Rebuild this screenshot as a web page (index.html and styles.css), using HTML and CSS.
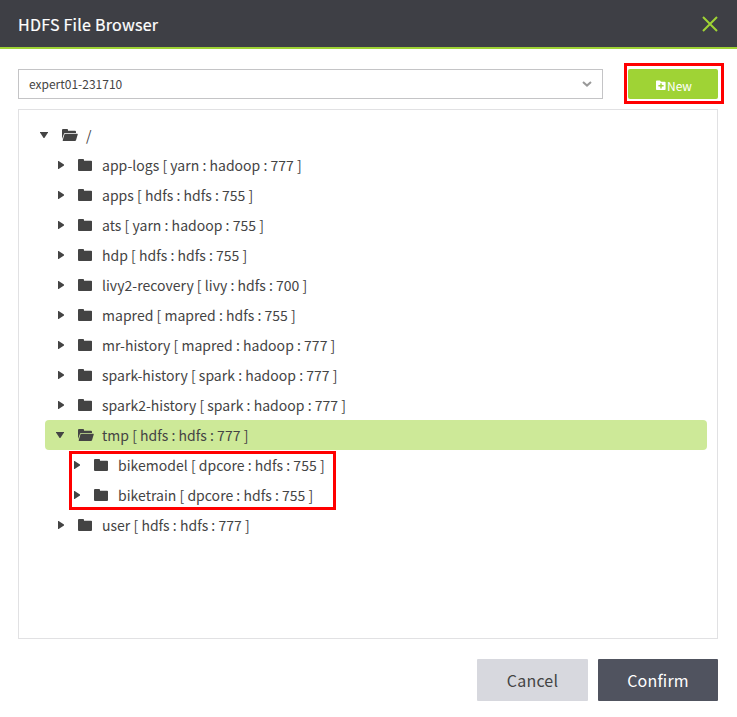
FILE: index.html
```html
<!DOCTYPE html>
<html lang="en">
<head>
<meta charset="utf-8">
<title>HDFS File Browser</title>
<link rel="stylesheet" href="styles.css">
</head>
<body>
<svg width="0" height="0" class="defs">
  <symbol id="closed" viewBox="0 0 14 12"><path d="M0 1Q0 0 1 0H5.2Q6 0 6 1V1.8H13.2Q14 1.8 14 2.6V11Q14 12 13 12H1Q0 12 0 11Z"/></symbol>
  <symbol id="open" viewBox="0 0 16 12"><path d="M0 10V1Q0 0 1 0H5.2Q6 0 6 1V1.8H13Q14 1.8 14 2.8V3.9H3.2Q2.3 3.9 2 4.7Z"/><path d="M3.4 4.7H15.3Q16 4.7 15.8 5.3L14 11.2Q13.7 12 13 12H1.2Q.5 12 .7 11.3L2.5 5.3Q2.7 4.7 3.4 4.7Z"/></symbol>
  <symbol id="right" viewBox="0 0 6 8"><path d="M0 0H.6L6 3.6V4.4L.6 8H0Z"/></symbol>
  <symbol id="down" viewBox="0 0 8 6"><path d="M0 0H8V.6L4.4 6H3.6L0 .6Z"/></symbol>
</svg>
<div class="dialog">
  <header class="header">
    <h1 class="title">HDFS File Browser</h1>
    <svg class="close" viewBox="0 0 16 16"><path d="M1 1 15 15M15 1 1 15"/></svg>
  </header>
  <main class="content">
    <div class="toolbar">
      <div class="select"><span>expert01-231710</span><svg class="chevron" viewBox="0 0 10 6"><path d="M1 1 5 4.6 9 1"/></svg></div>
      <button class="new"><svg class="add" viewBox="0 0 10 10"><path fill="#fff" d="M0 1.2Q0 .4 .8 .4H4L5 1.7H8.8Q9.6 1.7 9.6 2.4V9.2Q9.6 10 8.8 10H.8Q0 10 0 9.2Z"/><path stroke="#9fd335" stroke-width="1.4" d="M5 3.2V8.4M2.4 5.8H7.6"/></svg><span>New</span></button>
    </div>
    <ul class="tree">
      <li class="row root"><svg class="arrow"><use href="#down"/></svg><svg class="folder open"><use href="#open"/></svg><span>/</span></li>
      <li class="row"><svg class="arrow right"><use href="#right"/></svg><svg class="folder"><use href="#closed"/></svg><span>app-logs [ yarn : hadoop : 777 ]</span></li>
      <li class="row"><svg class="arrow right"><use href="#right"/></svg><svg class="folder"><use href="#closed"/></svg><span>apps [ hdfs : hdfs : 755 ]</span></li>
      <li class="row"><svg class="arrow right"><use href="#right"/></svg><svg class="folder"><use href="#closed"/></svg><span>ats [ yarn : hadoop : 755 ]</span></li>
      <li class="row"><svg class="arrow right"><use href="#right"/></svg><svg class="folder"><use href="#closed"/></svg><span>hdp [ hdfs : hdfs : 755 ]</span></li>
      <li class="row"><svg class="arrow right"><use href="#right"/></svg><svg class="folder"><use href="#closed"/></svg><span>livy2-recovery [ livy : hdfs : 700 ]</span></li>
      <li class="row"><svg class="arrow right"><use href="#right"/></svg><svg class="folder"><use href="#closed"/></svg><span>mapred [ mapred : hdfs : 755 ]</span></li>
      <li class="row"><svg class="arrow right"><use href="#right"/></svg><svg class="folder"><use href="#closed"/></svg><span>mr-history [ mapred : hadoop : 777 ]</span></li>
      <li class="row"><svg class="arrow right"><use href="#right"/></svg><svg class="folder"><use href="#closed"/></svg><span>spark-history [ spark : hadoop : 777 ]</span></li>
      <li class="row"><svg class="arrow right"><use href="#right"/></svg><svg class="folder"><use href="#closed"/></svg><span>spark2-history [ spark : hadoop : 777 ]</span></li>
      <li class="row selected"><svg class="arrow"><use href="#down"/></svg><svg class="folder open"><use href="#open"/></svg><span>tmp [ hdfs : hdfs : 777 ]</span></li>
      <li class="group">
        <ul class="children">
          <li class="row child"><svg class="arrow right"><use href="#right"/></svg><svg class="folder"><use href="#closed"/></svg><span>bikemodel [ dpcore : hdfs : 755 ]</span></li>
          <li class="row child"><svg class="arrow right"><use href="#right"/></svg><svg class="folder"><use href="#closed"/></svg><span>biketrain [ dpcore : hdfs : 755 ]</span></li>
        </ul>
      </li>
      <li class="row"><svg class="arrow right"><use href="#right"/></svg><svg class="folder"><use href="#closed"/></svg><span>user [ hdfs : hdfs : 777 ]</span></li>
    </ul>
  </main>
  <footer class="footer"><button class="button cancel">Cancel</button><button class="button confirm">Confirm</button></footer>
</div>
</body>
</html>
```
FILE: styles.css
```css
*, *::after { box-sizing: border-box; }
body, h1, ul { margin: 0; padding: 0; }
body { background: #fff; color: #444; font-family: "Noto Sans CJK KR", "Noto Sans CJK SC", sans-serif; overflow: hidden; }
ul { list-style: none; }
svg { display: block; flex: none; }
button { border: 0; font-family: inherit; padding: 0; }
.defs { position: absolute; }
.dialog { height: 717px; }
.header { height: 49px; background: #3e3f45; border-bottom: 2px solid #9fd335; display: flex; justify-content: space-between; align-items: center; padding: 1px 19px 0 18px; }
.title { color: #fff; font-size: 16px; font-weight: 400; line-height: 24px; letter-spacing: .25px; -webkit-text-stroke: .2px #fff; }
.close { width: 16px; height: 16px; fill: none; stroke: #9fd335; stroke-width: 2; }
.content { padding: 20px 19px 0 18px; }
.toolbar { display: flex; justify-content: space-between; height: 30px; margin-bottom: 10px; }
.select { width: 585px; border: 1px solid #c4c4c6; padding: 0 10px; display: flex; align-items: center; justify-content: space-between; font-size: 12px; line-height: 28px; }
.chevron { width: 10px; height: 6px; fill: none; stroke: #999; stroke-width: 2; }
.new { position: relative; width: 90px; background: #9fd335; border-radius: 2px; color: #fff; font-size: 12px; display: flex; align-items: center; justify-content: center; gap: 1px; padding: 3px 0 0 2px; }
.add { width: 10px; height: 10px; fill: none; margin-bottom: 1px; }
.new::after { content: ""; position: absolute; inset: -6px -6px -5px -4px; border: 3px solid #f00; }
.tree { height: 530px; border: 1px solid #e1e1e3; padding: 10px 10px 0 26px; }
.row { height: 30px; display: flex; align-items: center; padding-left: 11px; font-size: 14px; line-height: 28px; letter-spacing: .02px; white-space: pre; }
.row.root { margin-left: -16px; }
.row.selected { background: #cde998; border-radius: 4px; }
.row.child { padding-left: 27px; }
.arrow { width: 8px; height: 6px; fill: #444; margin-right: 14px; }
.arrow.right { width: 6px; height: 8px; margin: 0 14px 0 2px; }
.folder { width: 14px; height: 12px; fill: #444; margin-right: 10px; }
.folder.open { width: 16px; margin-right: 8px; }
.group { position: relative; }
.group::after { content: ""; position: absolute; left: 24px; top: 1px; width: 267px; height: 59px; border: 3px solid #f00; }
.footer { display: flex; justify-content: flex-end; gap: 10px; padding: 20px 19px 0 0; }
.button { height: 42px; border-radius: 1px; font-size: 16px; letter-spacing: .2px; }
.cancel { width: 111px; background: #d7d8de; color: #444; }
.confirm { width: 120px; background: #50535f; color: #fff; }
```
